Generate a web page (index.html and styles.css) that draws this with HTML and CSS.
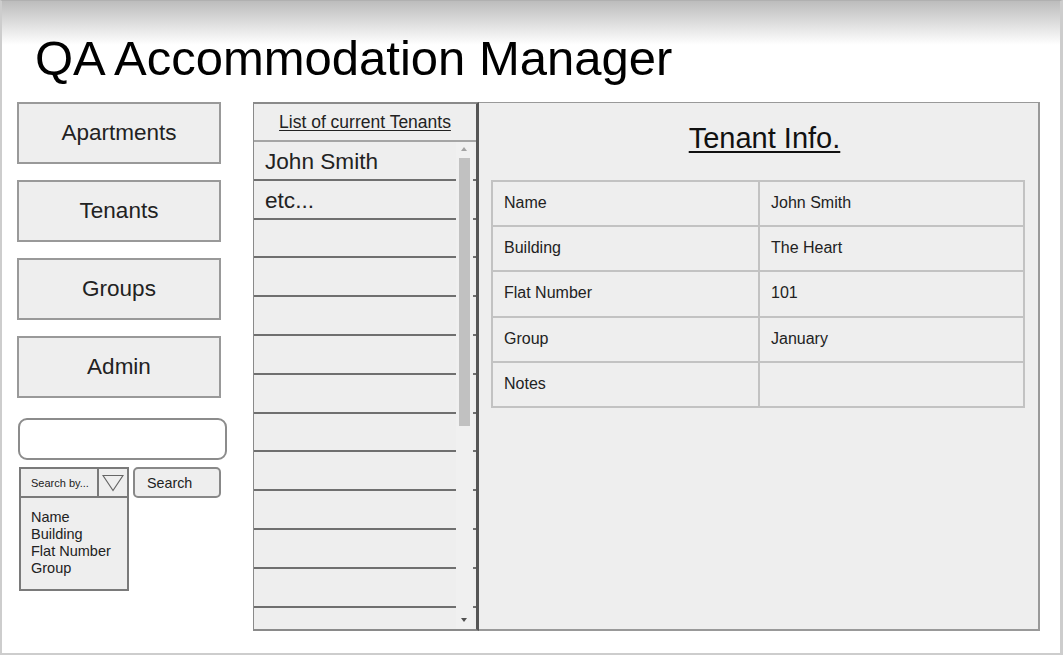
FILE: index.html
```html
<!DOCTYPE html>
<html>
<head>
<meta charset="utf-8">
<title>QA Accommodation Manager</title>
<link rel="stylesheet" href="styles.css">
</head>
<body>
<div class="frame">
  <h1 class="title">QA Accommodation Manager</h1>
  <div class="main">
    <aside class="sidebar">
      <div class="nav-btn">Apartments</div>
      <div class="nav-btn">Tenants</div>
      <div class="nav-btn">Groups</div>
      <div class="nav-btn">Admin</div>
      <div class="search-input"></div>
      <div class="search-row">
        <div class="dropdown">
          <div class="dd-head">
            <span class="dd-label">Search by...</span>
            <span class="dd-arrow">
              <svg width="22" height="18" viewBox="0 0 22 18"><path d="M1 1.5 H21 L11 16.5 Z" fill="none" stroke="#666" stroke-width="1.2"/></svg>
            </span>
          </div>
          <div class="dd-list">
            <div>Name</div>
            <div>Building</div>
            <div>Flat Number</div>
            <div>Group</div>
          </div>
        </div>
        <div class="search-btn">Search</div>
      </div>
    </aside>

    <section class="list-panel">
      <div class="list-head"><span>List of current Tenants</span></div>
      <div class="list-body">
        <div class="row">John Smith</div>
        <div class="row">etc...</div>
        <div class="row"></div>
        <div class="row"></div>
        <div class="row"></div>
        <div class="row"></div>
        <div class="row"></div>
        <div class="row"></div>
        <div class="row"></div>
        <div class="row"></div>
        <div class="row"></div>
        <div class="row"></div>
        <div class="row"></div>
        <div class="scrollbar">
          <span class="sb-up"></span>
          <span class="sb-thumb"></span>
          <span class="sb-down"></span>
        </div>
      </div>
    </section>

    <section class="info-panel">
      <h2 class="info-title">Tenant Info.</h2>
      <table class="info-table">
        <tr><td>Name</td><td>John Smith</td></tr>
        <tr><td>Building</td><td>The Heart</td></tr>
        <tr><td>Flat Number</td><td>101</td></tr>
        <tr><td>Group</td><td>January</td></tr>
        <tr><td>Notes</td><td></td></tr>
      </table>
    </section>
  </div>
</div>
</body>
</html>
```

FILE: styles.css
```css
* { box-sizing: border-box; }

html, body {
  margin: 0;
  padding: 0;
  background: #ffffff;
}

body {
  font-family: "Liberation Sans", Arial, sans-serif;
  color: #222222;
}

.frame {
  width: 1063px;
  height: 655px;
  border-left: 2px solid #cdcdcd;
  border-right: 3px solid #cdcdcd;
  border-bottom: 2px solid #cdcdcd;
  border-top: 1px solid #b0b0b0;
  background: linear-gradient(#bcbcbc 0px, #ffffff 44px) no-repeat top left / 100% 44px, #ffffff;
  overflow: hidden;
}

.title {
  margin: 0;
  padding: 29px 0 0 33px;
  font-size: 49px;
  line-height: 56px;
  font-weight: normal;
  color: #000;
}

.main {
  display: flex;
  align-items: flex-start;
  margin-top: 16px;
  padding-left: 15px;
}

/* Sidebar */
.sidebar {
  width: 209px;
  display: flex;
  flex-direction: column;
}

.nav-btn {
  width: 204px;
  height: 62px;
  border: 2px solid #999;
  background: #eeeeee;
  font-size: 22.5px;
  display: flex;
  align-items: center;
  justify-content: center;
  margin-bottom: 16px;
  color: #222;
}

.nav-btn:nth-child(4) {
  margin-bottom: 20px;
}

.search-input {
  width: 209px;
  height: 42px;
  margin-left: 1px;
  border: 2px solid #8c8c8c;
  border-radius: 9px;
  background: #fff;
}

.search-row {
  display: flex;
  align-items: flex-start;
  gap: 4px;
  margin-top: 7px;
  margin-left: 2px;
}

.dropdown {
  width: 110px;
  border: 2px solid #7a7a7a;
  background: #eeeeee;
}

.dd-head {
  display: flex;
  height: 29px;
  border-bottom: 2px solid #7a7a7a;
}

.dd-label {
  flex: 1;
  font-size: 11px;
  padding-left: 10px;
  display: flex;
  align-items: center;
  color: #222;
}

.dd-arrow {
  width: 30px;
  border-left: 2px solid #7a7a7a;
  display: flex;
  align-items: center;
  justify-content: center;
}

.dd-list {
  height: 91px;
  padding: 11px 0 0 10px;
  font-size: 14.5px;
  line-height: 17px;
  color: #222;
}

.search-btn {
  width: 88px;
  height: 31px;
  border: 2px solid #888;
  border-radius: 5px;
  background: #eeeeee;
  font-size: 14.3px;
  display: flex;
  align-items: center;
  padding-left: 12px;
  color: #222;
}

/* List panel */
.list-panel {
  width: 226px;
  height: 529px;
  margin-left: 27px;
  border-top: 2px solid #8a8a8a;
  border-left: 1px solid #8a8a8a;
  border-bottom: 2px solid #8a8a8a;
  border-right: 3px solid #555;
  background: #eeeeee;
  display: flex;
  flex-direction: column;
}

.list-head {
  height: 38px;
  border-bottom: 2px solid #a5a5a5;
  display: flex;
  align-items: center;
  justify-content: center;
  font-size: 17.5px;
  padding-top: 1px;
}

.list-head span {
  text-decoration: underline;
  text-underline-offset: 2px;
  color: #222;
}

.list-body {
  position: relative;
  flex: 1;
  overflow: hidden;
}

.row {
  height: 38.8px;
  border-bottom: 2px solid #6f6f6f;
  font-size: 22.6px;
  padding: 3px 0 0 11px;
  display: flex;
  align-items: center;
  color: #222;
}

.scrollbar {
  position: absolute;
  top: 0;
  bottom: 0;
  right: 3px;
  width: 17px;
  background: #f0f0f0;
}

.sb-thumb {
  position: absolute;
  left: 3px;
  width: 11px;
  top: 16px;
  height: 268px;
  background: #c1c1c1;
}

.sb-up {
  position: absolute;
  left: 5px;
  top: 5px;
  width: 0;
  height: 0;
  border-left: 3.5px solid transparent;
  border-right: 3.5px solid transparent;
  border-bottom: 4px solid #a3a3a3;
}

.sb-down {
  position: absolute;
  left: 5px;
  bottom: 7px;
  width: 0;
  height: 0;
  border-left: 3.5px solid transparent;
  border-right: 3.5px solid transparent;
  border-top: 4px solid #505050;
}

/* Info panel */
.info-panel {
  width: 561px;
  height: 529px;
  border-top: 1px solid #999;
  border-right: 2px solid #999;
  border-bottom: 2px solid #999;
  background: #eeeeee;
  padding: 19px 0 0 12px;
}

.info-title {
  margin: 0 0 26px 0;
  font-size: 29px;
  line-height: 32px;
  font-weight: normal;
  text-align: center;
  text-decoration: underline;
  text-underline-offset: 3px;
  color: #111;
}

.info-table {
  width: 534px;
  border-collapse: collapse;
  font-size: 16px;
  color: #222;
}

.info-table td {
  height: 45.2px;
  border: 2px solid #c2c2c2;
  padding: 0 0 1px 11px;
  vertical-align: middle;
}

.info-table td:first-child {
  width: 267px;
}
```
